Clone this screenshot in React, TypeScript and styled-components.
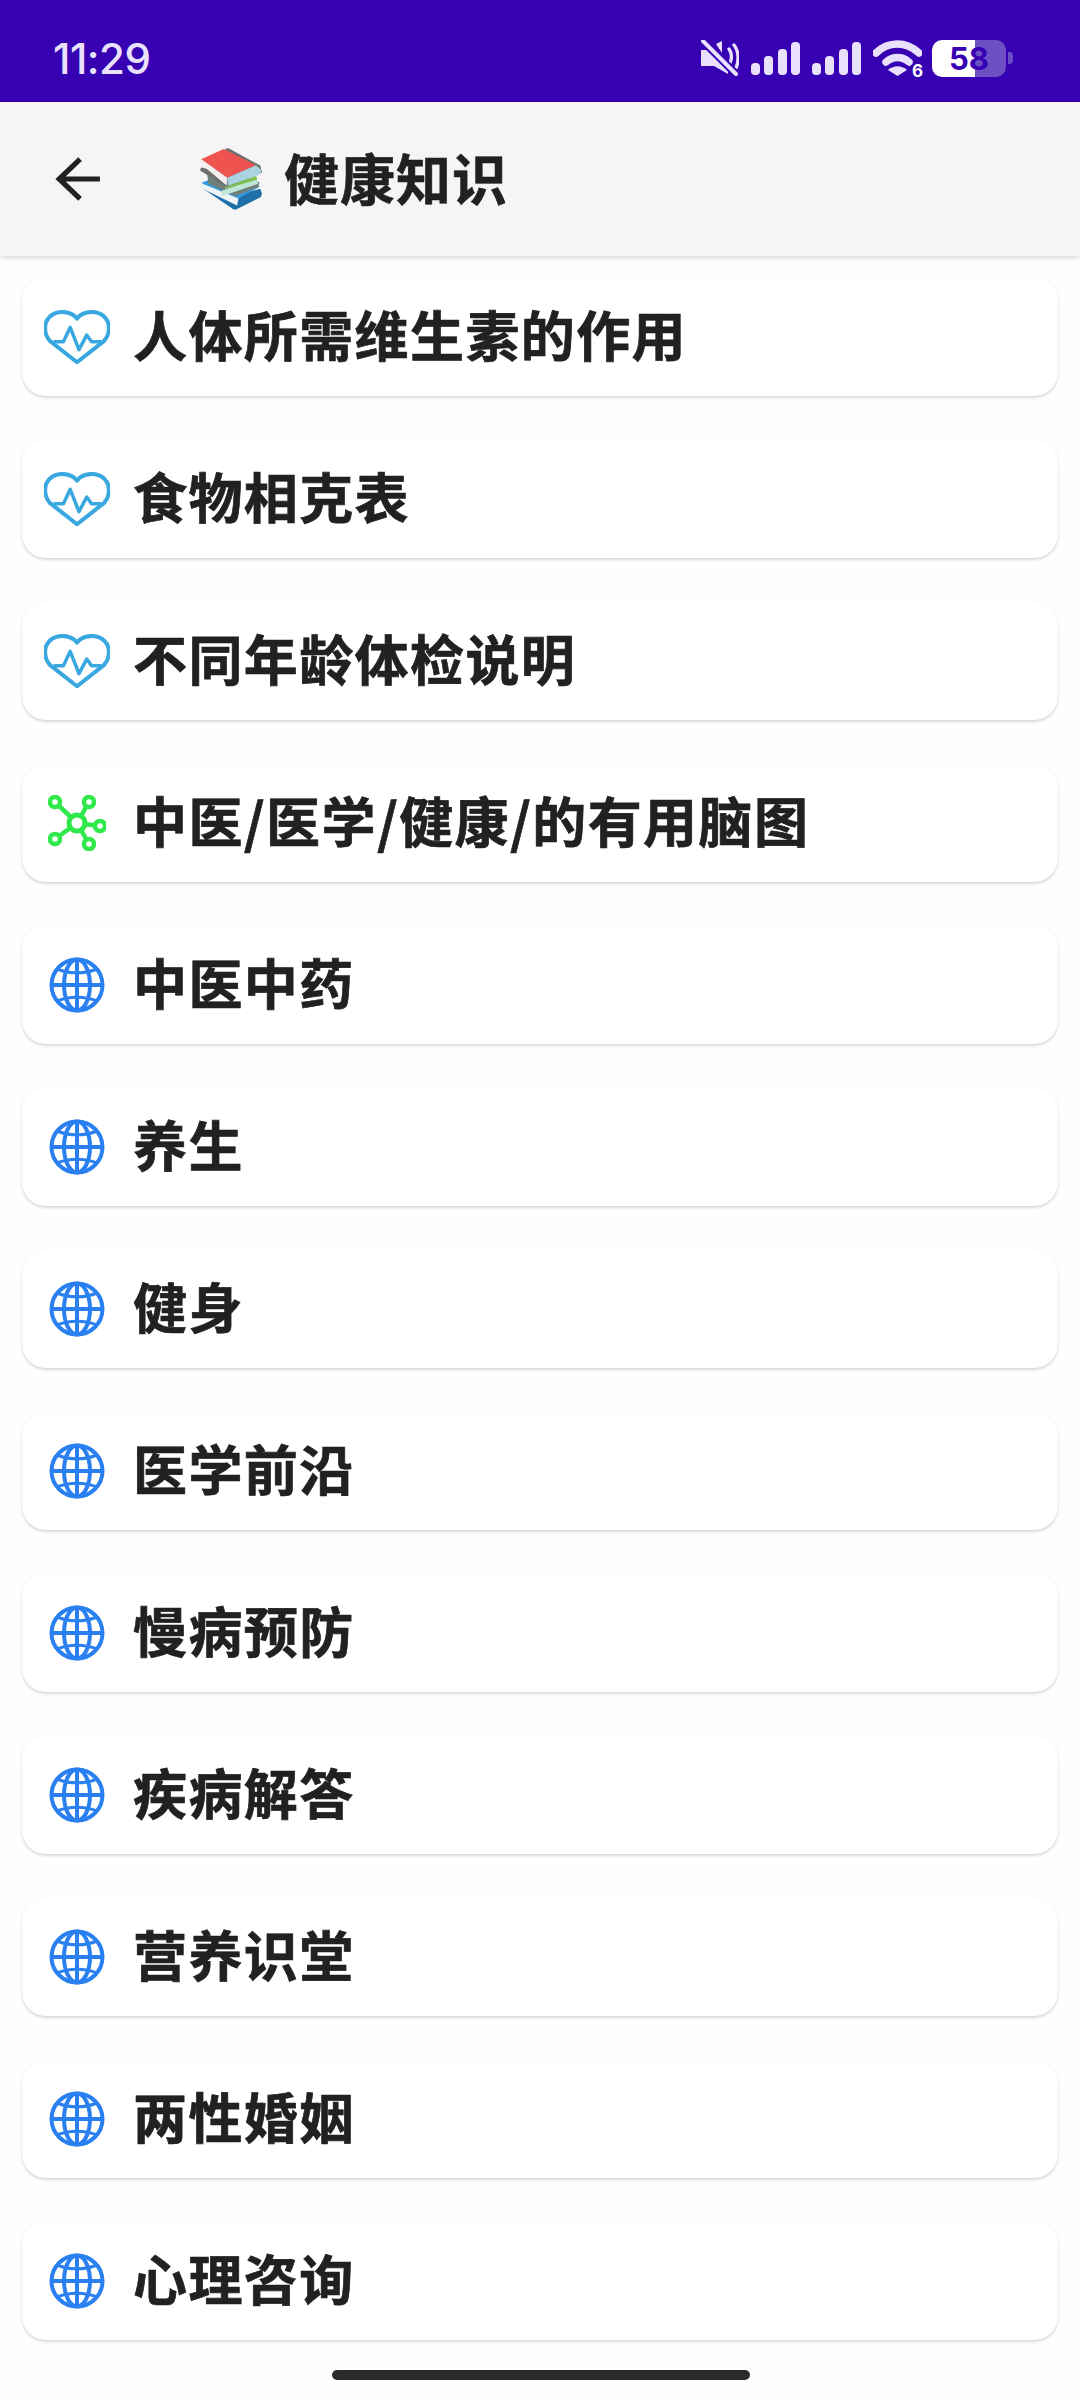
import React from "react";
import styled, { createGlobalStyle } from "styled-components";

const GlobalStyle = createGlobalStyle`
    html, body {
        margin: 0;
        padding: 0;
        background: #fefefe;
    }
    body {
        font-family: "Noto Sans CJK SC", "Noto Sans", sans-serif;
    }
`;

const PageContainer = styled.div`
    position: relative;
    width: 1080px;
    height: 2400px;
    overflow: hidden;
    background: #fefefe;
    display: flex;
    flex-direction: column;
`;

const StatusBar = styled.div`
    height: 102px;
    flex-shrink: 0;
    background: #3700b3;
    display: flex;
    align-items: center;
    justify-content: space-between;
    padding: 14px 67px 0 53px;
    box-sizing: border-box;
    color: #e9e0fb;
`;

const Clock = styled.div`
    font-family: Inter, Roboto, sans-serif;
    font-size: 42px;
    font-weight: 500;
    letter-spacing: -0.5px;
`;

const StatusIcons = styled.div`
    display: flex;
    align-items: center;
    gap: 12px;
`;

const WifiWrap = styled.div`
    position: relative;
    width: 49px;
    height: 38px;
`;

const WifiBadge = styled.span`
    position: absolute;
    right: -1px;
    bottom: -3px;
    font-family: Inter, Roboto, sans-serif;
    font-size: 17px;
    font-weight: 700;
    line-height: 1;
    color: #ffffff;
    text-shadow: 0 0 2px #3700b3;
`;

const Battery = styled.div`
    display: flex;
    align-items: center;
    gap: 2px;
    margin-left: -2px;
`;

const BatteryBody = styled.div`
    width: 74px;
    height: 37px;
    border-radius: 10px;
    background: linear-gradient(90deg, #ffffff 58%, #6d4fc4 58%);
    color: #3700b3;
    font-family: Inter, Roboto, sans-serif;
    font-size: 31px;
    font-weight: 700;
    display: flex;
    align-items: center;
    justify-content: center;
    line-height: 1;
`;

const BatteryTip = styled.div`
    width: 5px;
    height: 12px;
    border-radius: 0 4px 4px 0;
    background: #6d4fc4;
`;

const AppBar = styled.div`
    position: relative;
    z-index: 1;
    height: 154px;
    flex-shrink: 0;
    background: #f5f5f5;
    box-shadow: 0 2px 5px rgba(0, 0, 0, 0.14);
    display: flex;
    align-items: center;
    box-sizing: border-box;
    padding-left: 55px;
`;

const BackIcon = styled.svg`
    width: 46px;
    height: 46px;
    flex-shrink: 0;
`;

const BooksIcon = styled.svg`
    width: 62px;
    height: 62px;
    flex-shrink: 0;
    margin-left: 99px;
`;

const Title = styled.h1`
    margin: 0 0 0 22px;
    padding-bottom: 5px;
    font-size: 55px;
    font-weight: 700;
    letter-spacing: 1px;
    -webkit-text-stroke: 0.6px #212121;
    color: #212121;
    line-height: 1;
`;

const List = styled.div`
    display: flex;
    flex-direction: column;
    gap: 43px;
    padding: 21px 22px 0;
`;

const Card = styled.div`
    height: 119px;
    box-sizing: border-box;
    background: #ffffff;
    border-radius: 24px;
    box-shadow: 0 2px 3px rgba(0, 0, 0, 0.14), 0 0 2px rgba(0, 0, 0, 0.05);
    display: flex;
    align-items: center;
    gap: 23px;
    padding-left: 22px;
`;

const IconSlot = styled.div`
    width: 66px;
    height: 66px;
    flex-shrink: 0;
    display: flex;
    align-items: center;
    justify-content: center;
`;

const CardText = styled.div`
    padding-bottom: 6px;
    font-size: 54px;
    font-weight: 700;
    letter-spacing: 1.4px;
    -webkit-text-stroke: 0.7px #212121;
    color: #212121;
    line-height: 1;
`;

const HomeIndicator = styled.div`
    position: absolute;
    left: 332px;
    top: 2370px;
    width: 418px;
    height: 10px;
    border-radius: 5px;
    background: #2b2b2b;
`;

const MuteIcon = () => (
    <svg width="38" height="36" viewBox="0 0 38 36">
        <path d="M0 10h7l5-4 15 15v13L13 26H0z" fill="#e9e0fb" />
        <path d="M15 4l6-3v12z" fill="#e9e0fb" />
        <path d="M28 9c3 4 3 10 1 14M33 5c5 6 5 17 2 23" fill="none" stroke="#e9e0fb" strokeWidth="3.4" strokeLinecap="round" />
        <path d="M2 1l33 33" stroke="#3700b3" strokeWidth="8" />
        <path d="M2 1l33 33" stroke="#e9e0fb" strokeWidth="4" strokeLinecap="round" />
    </svg>
);

const SignalIcon = () => (
    <svg width="49" height="33" viewBox="0 0 49 33" fill="#e9e0fb">
        <rect x="0" y="21" width="9" height="12" rx="4" />
        <rect x="13" y="14" width="9" height="19" rx="4" />
        <rect x="27" y="7" width="9" height="26" rx="4" />
        <rect x="40" y="0" width="9" height="33" rx="4" />
    </svg>
);

const WifiIcon = () => (
    <WifiWrap>
        <svg width="49" height="38" viewBox="0 0 49 38">
            <path d="M3 14C15 2 33 2 46 14" fill="none" stroke="#e9e0fb" strokeWidth="7.500" strokeLinecap="round" />
            <path d="M13 23c7-6 16-6 23 0" fill="none" stroke="#e9e0fb" strokeWidth="7.500" strokeLinecap="round" />
            <path d="M15 31c6-5 13-5 19 0l-9.500 6z" fill="#e9e0fb" />
        </svg>
        <WifiBadge>6</WifiBadge>
    </WifiWrap>
);

const BackArrow = () => (
    <BackIcon viewBox="0 0 44 44">
        <path d="M43 22H5M24 3L4 22l20 19" fill="none" stroke="#212121" strokeWidth="5" />
    </BackIcon>
);

const Books = () => (
    <BooksIcon viewBox="0 0 177 177">
        <path d="M3 112l12-14 95 36 62-18 5 14-3 10-68 34c-4 2-8 2-12 0z" fill="#1f6fa8" />
        <path d="M3 100l64-26 104 36-62 34z" fill="#2f9be0" />
        <path d="M3 100v14l103 50 4-20z" fill="#eef4f6" />
        <path d="M20 70l30-18 120 46-4 14-66 26-76-36z" fill="#6f7f7a" />
        <path d="M62 122l100-36 4 16-104 36z" fill="#bfe6d8" />
        <path d="M70 112l90-32 4 10-90 26z" fill="#7cc04f" />
        <path d="M3 44L2 62l72 44 2-24z" fill="#f3eeee" />
        <path d="M72 2c4-2 8-2 12 0l88 48 5 20-100 40-7-2-70-44 3-8 92 20z" fill="#6f6f6f" />
        <path d="M3 32L68 3l92 46-82 36z" fill="#ef5350" />
        <path d="M3 32L78 85l-2 22L3 46z" fill="#f4efef" />
        <path d="M78 85l82-36 15 14-3 13-92 32z" fill="#a9d3e0" />
    </BooksIcon>
);

const HeartIcon = () => (
    <svg width="68" height="56" viewBox="0 0 68 56">
        <path d="M34 9C28 1 14-0 6 7c-7 7-6 18 0 25l28 22 28-22c6-7 7-18 0-25-8-7-22-6-28 2z" fill="none" stroke="#3aa8e0" strokeWidth="4.200" strokeLinejoin="round" />
        <path d="M10 33h10l7-15 9 23 8-15 5 7h10" fill="none" stroke="#3aa8e0" strokeWidth="3.600" strokeLinejoin="round" />
    </svg>
);

const NetworkIcon = () => (
    <svg width="58" height="56" viewBox="0 0 58 56" fill="none" stroke="#2fe84a" strokeWidth="4.500">
        <path d="M7 7l22 21M41 7L29 28M52 31L29 28M7 44l22-16M41 49L29 28" strokeWidth="4.500" />
        <circle cx="29" cy="28" r="8" fill="#ffffff" strokeWidth="5" />
        <circle cx="7" cy="7" r="5" fill="#ffffff" />
        <circle cx="41" cy="7" r="5" fill="#ffffff" />
        <circle cx="52" cy="31" r="5" fill="#ffffff" />
        <circle cx="7" cy="44" r="5" fill="#ffffff" />
        <circle cx="41" cy="49" r="5" fill="#ffffff" />
    </svg>
);

const GlobeIcon = () => (
    <svg width="56" height="56" viewBox="0 0 56 56" fill="none" stroke="#2a80f0" strokeWidth="4">
        <circle cx="28" cy="28" r="25.500" />
        <ellipse cx="28" cy="28" rx="13" ry="25.500" />
        <path d="M28 2.500v51M2.500 28h51" />
        <path d="M8 12c12 5 28 5 40 0M8 44c12-5 28-5 40 0" strokeWidth="3" />
    </svg>
);

const items: { icon: "heart" | "net" | "globe"; text: string }[] = [
    { icon: "heart", text: "人体所需维生素的作用" },
    { icon: "heart", text: "食物相克表" },
    { icon: "heart", text: "不同年龄体检说明" },
    { icon: "net", text: "中医/医学/健康/的有用脑图" },
    { icon: "globe", text: "中医中药" },
    { icon: "globe", text: "养生" },
    { icon: "globe", text: "健身" },
    { icon: "globe", text: "医学前沿" },
    { icon: "globe", text: "慢病预防" },
    { icon: "globe", text: "疾病解答" },
    { icon: "globe", text: "营养识堂" },
    { icon: "globe", text: "两性婚姻" },
    { icon: "globe", text: "心理咨询" },
];

const icons = {
    heart: <HeartIcon />,
    net: <NetworkIcon />,
    globe: <GlobeIcon />,
};

export default function App() {
    return (
        <PageContainer>
            <GlobalStyle />
            <StatusBar>
                <Clock>11:29</Clock>
                <StatusIcons>
                    <MuteIcon />
                    <SignalIcon />
                    <SignalIcon />
                    <WifiIcon />
                    <Battery>
                        <BatteryBody>58</BatteryBody>
                        <BatteryTip />
                    </Battery>
                </StatusIcons>
            </StatusBar>
            <AppBar>
                <BackArrow />
                <Books />
                <Title>健康知识</Title>
            </AppBar>
            <List>
                {items.map(({ icon, text }) => (
                    <Card key={text}>
                        <IconSlot>{icons[icon]}</IconSlot>
                        <CardText>{text}</CardText>
                    </Card>
                ))}
            </List>
            <HomeIndicator />
        </PageContainer>
    );
}
